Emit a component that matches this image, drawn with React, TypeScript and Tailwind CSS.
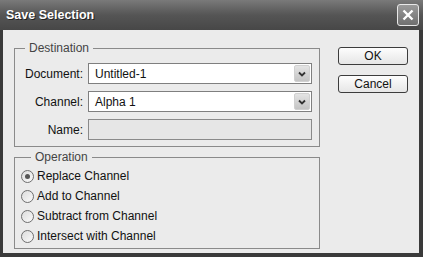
import React from 'react';

const font = { fontFamily: '"Liberation Sans", Arial, sans-serif' };

const Select = ({ value }: { value: string }) => (
    <div className="h-[21px] w-[224px] border border-[#7f7f7f] bg-white flex items-center justify-between pl-[6px] pr-px">
        <span className="text-[12px] text-[#111] leading-none">{value}</span>
        <div className="h-[17px] w-[16px] rounded-[2px] bg-gradient-to-b from-[#e4e4e4] to-[#c4c4c4] border border-[#d0d0d0] flex items-center justify-center">
            <svg width="8" height="6" viewBox="0 0 8 6">
                <path d="M1 1.5 L4 4.5 L7 1.5" fill="none" stroke="#333" strokeWidth="1.8" />
            </svg>
        </div>
    </div>
);

const Radio = ({ label, checked }: { label: string; checked?: boolean }) => (
    <div className="h-[20px] flex items-center gap-[3px]">
        <div className="h-[13px] w-[13px] rounded-full border border-[#6e6e6e] bg-gradient-to-br from-[#dcdcdc] to-[#fafafa] flex items-center justify-center">
            {checked && <div className="h-[5px] w-[5px] rounded-full bg-[#555]" />}
        </div>
        <span className="text-[12px] text-[#111]">{label}</span>
    </div>
);

const Button = ({ label }: { label: string }) => (
    <button className="h-[18px] w-[70px] rounded-[3px] border border-[#3c3c3c] bg-gradient-to-b from-[#fdfdfd] to-[#e6e6e6] text-[12px] text-[#111] leading-none flex items-center justify-center">
        {label}
    </button>
);

const Field = ({ label, children }: { label: string; children: React.ReactNode }) => (
    <div className="flex items-center gap-[5px]">
        <span className="w-[68px] text-right text-[12px] text-[#111]">{label}</span>
        {children}
    </div>
);

export default function App() {
    return (
        <div style={font} className="w-[423px] h-[257px] bg-[#3a3a3a] flex flex-col overflow-hidden">

            {/* Title bar */}
            <div className="h-[30px] shrink-0 bg-gradient-to-b from-[#7a7a7a] via-[#555] to-[#474747] flex items-center justify-between pl-[6px] pr-[4px]">
                <span className="text-white font-bold text-[12.5px] [text-shadow:1px_1px_0_#222]">Save Selection</span>
                <div className="h-[22px] w-[22px] rounded-[3px] border border-[#e8e8e8] bg-gradient-to-b from-[#9a9a9a] to-[#707070] flex items-center justify-center">
                    <svg width="12" height="12" viewBox="0 0 12 12">
                        <path d="M1.5 1.5 L10.5 10.5 M10.5 1.5 L1.5 10.5" stroke="#fff" strokeWidth="2.4" />
                    </svg>
                </div>
            </div>

            {/* Body */}
            <div className="flex-1 ml-[3px] mr-[4px] mb-[4px] bg-[#ebebeb] flex pl-[11px] pt-[11px] gap-[18px]">

                <div className="flex flex-col gap-[3px] w-[306px]">
                    <fieldset className="border border-[#8a8a8a] pr-[6px] pt-[8px] pb-[6px]">
                        <legend className="ml-[10px] px-[4px] text-[12px] leading-[14px] text-[#444]">Destination</legend>
                        <div className="flex flex-col gap-[7px]">
                            <Field label="Document:">
                                <Select value="Untitled-1" />
                            </Field>
                            <Field label="Channel:">
                                <Select value="Alpha 1" />
                            </Field>
                            <Field label="Name:">
                                <div className="h-[21px] w-[224px] border border-[#8a8a8a] bg-[#e6e6e6]" />
                            </Field>
                        </div>
                    </fieldset>

                    <fieldset className="border border-[#8a8a8a] pl-[6px] pt-[2px] pb-[2px]">
                        <legend className="ml-[10px] px-[4px] text-[12px] leading-[14px] text-[#444]">Operation</legend>
                        <Radio label="Replace Channel" checked />
                        <Radio label="Add to Channel" />
                        <Radio label="Subtract from Channel" />
                        <Radio label="Intersect with Channel" />
                    </fieldset>
                </div>

                <div className="flex flex-col gap-[10px] pt-[6px]">
                    <Button label="OK" />
                    <Button label="Cancel" />
                </div>
            </div>
        </div>
    );
}
